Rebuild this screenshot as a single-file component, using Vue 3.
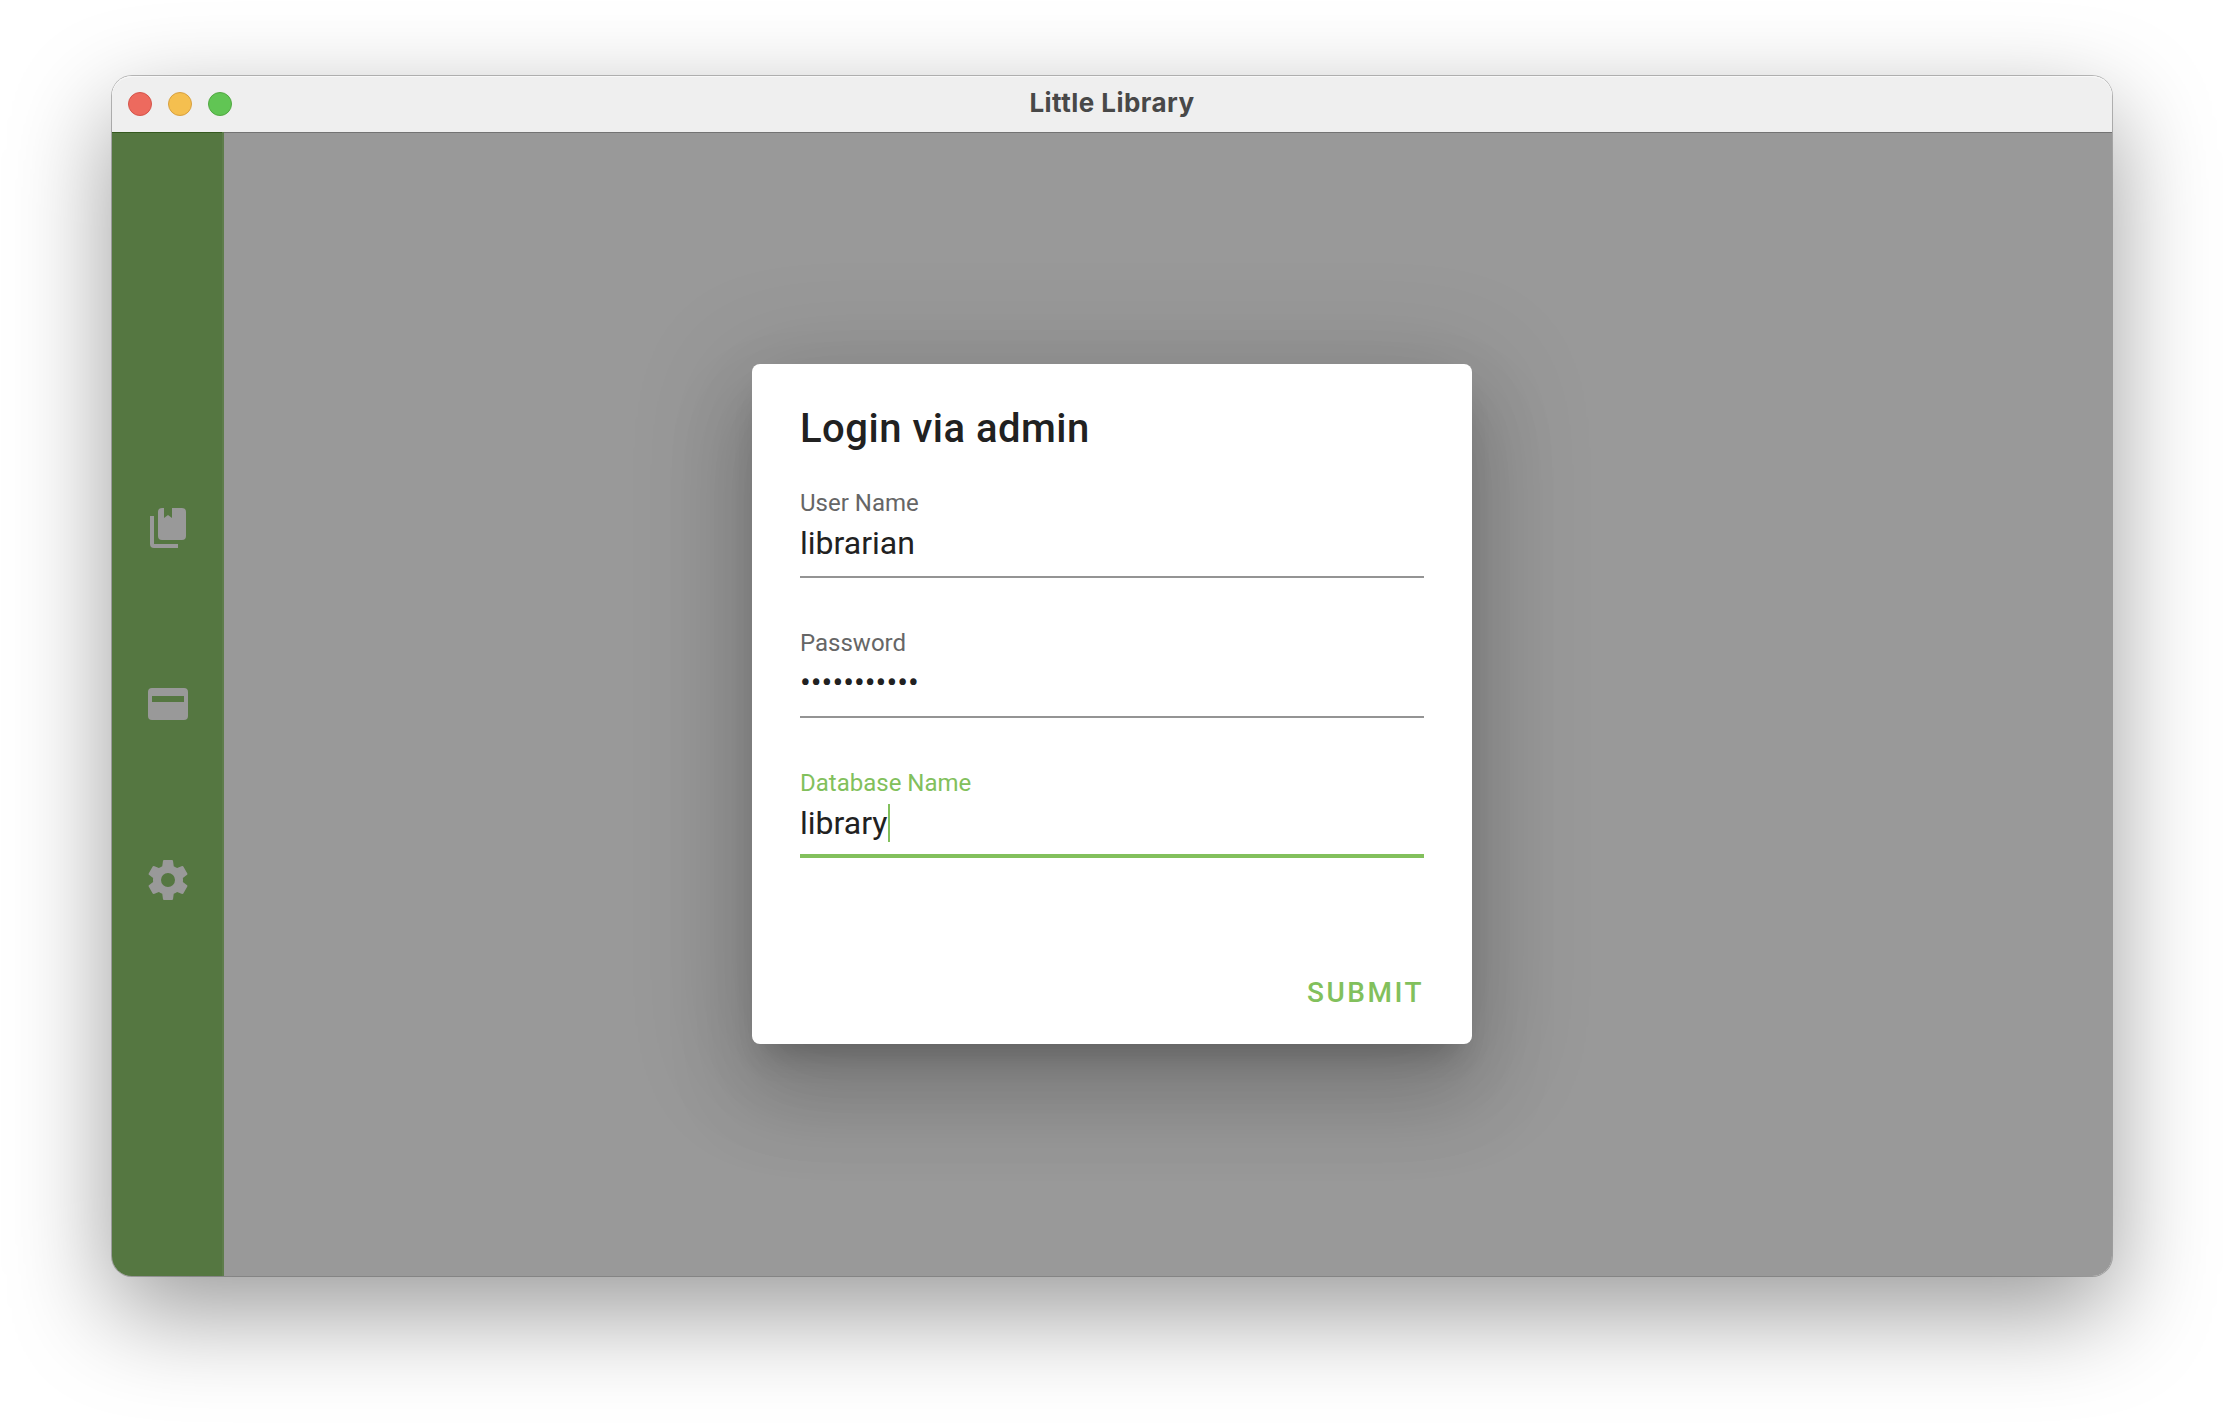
<script setup>
const navItems = [
  {
    name: 'books',
    path: 'M19 18a2 2 0 0 0 2-2V4a2 2 0 0 0-2-2h-5v5l-2-1.5L10 7V2H9a2 2 0 0 0-2 2v12a2 2 0 0 0 2 2h10zM17 20v2H5a2 2 0 0 1-2-2V6h2v14h12z',
  },
  {
    name: 'cards',
    path: 'M4 4h16a2 2 0 0 1 2 2v12a2 2 0 0 1-2 2H4a2 2 0 0 1-2-2V6a2 2 0 0 1 2-2zM4 8v3h16V8z',
  },
  {
    name: 'settings',
    path: 'M12 15.5A3.5 3.5 0 0 1 8.5 12 3.5 3.5 0 0 1 12 8.5a3.5 3.5 0 0 1 3.5 3.5 3.5 3.5 0 0 1-3.5 3.5m7.43-2.53c.04-.32.07-.64.07-.97s-.03-.66-.07-1l2.11-1.63c.19-.15.24-.42.12-.64l-2-3.46c-.12-.22-.39-.31-.61-.22l-2.49 1c-.52-.39-1.06-.73-1.69-.98l-.37-2.65A.506.506 0 0 0 14 2h-4c-.25 0-.46.18-.5.42l-.37 2.65c-.63.25-1.17.59-1.69.98l-2.49-1c-.22-.09-.49 0-.61.22l-2 3.46c-.13.22-.07.49.12.64L4.57 11c-.04.34-.07.67-.07 1s.03.65.07.97l-2.11 1.66c-.19.15-.25.42-.12.64l2 3.46c.12.22.39.3.61.22l2.49-1.01c.52.4 1.06.74 1.69.99l.37 2.65c.04.24.25.42.5.42h4c.25 0 .46-.18.5-.42l.37-2.65c.63-.26 1.17-.59 1.69-.99l2.49 1.01c.22.08.49 0 .61-.22l2-3.46c.12-.22.07-.49-.12-.64z',
  },
]

const fields = [
  { label: 'User Name', value: 'librarian' },
  { label: 'Password', value: '•••••••••••', secret: true },
  { label: 'Database Name', value: 'library', focused: true },
]
</script>

<template>
  <div class="desktop">
    <div class="window">
      <header class="titlebar">
        <div class="lights">
          <i class="light close"></i>
          <i class="light minimize"></i>
          <i class="light zoom"></i>
        </div>
        <span class="window-title">Little Library</span>
      </header>
      <div class="body">
        <nav class="sidebar">
          <svg v-for="item in navItems" :key="item.name" class="nav-icon" viewBox="0 0 24 24">
            <path :d="item.path" fill-rule="evenodd" />
          </svg>
        </nav>
        <main class="content">
          <section class="dialog">
            <h1 class="dialog-title">Login via admin</h1>
            <div
              v-for="field in fields"
              :key="field.label"
              class="field"
              :class="{ focused: field.focused }"
            >
              <label class="label">{{ field.label }}</label>
              <div class="value">
                <span :class="{ secret: field.secret }">{{ field.value }}</span>
                <i v-if="field.focused" class="caret"></i>
              </div>
            </div>
            <div class="actions">
              <button class="submit">SUBMIT</button>
            </div>
          </section>
        </main>
      </div>
    </div>
  </div>
</template>

<style>
body {
  margin: 0;
  background: #fff;
}
</style>

<style scoped>
.desktop {
  box-sizing: border-box;
  width: 2224px;
  height: 1424px;
  padding: 76px 112px 148px;
  overflow: hidden;
  background: #fff;
  font-family: Roboto, sans-serif;
}
.window {
  display: flex;
  flex-direction: column;
  height: 1200px;
  border-radius: 20px;
  box-shadow: 0 0 0 1px rgba(0, 0, 0, 0.25), 0 36px 100px rgba(0, 0, 0, 0.4);
}
.titlebar {
  display: grid;
  grid-template-columns: 1fr auto 1fr;
  align-items: center;
  box-sizing: border-box;
  height: 56px;
  padding: 0 16px;
  border-radius: 20px 20px 0 0;
  background: #efefef;
  box-shadow: inset 0 1px 0 #f8f8f8;
}
.lights {
  display: flex;
  gap: 16px;
}
.light {
  box-sizing: border-box;
  width: 24px;
  height: 24px;
  border-radius: 50%;
}
.close {
  background: #ed6a5e;
  border: 1px solid #d5544a;
}
.minimize {
  background: #f5bf4f;
  border: 1px solid #d8a040;
}
.zoom {
  background: #61c554;
  border: 1px solid #52a842;
}
.window-title {
  padding-bottom: 2px;
  font: 700 26px/32px Inter, sans-serif;
  letter-spacing: 0.45px;
  color: #484848;
}
.body {
  display: flex;
  flex: 1;
  border-radius: 0 0 20px 20px;
  overflow: hidden;
  background: #999;
  box-shadow: inset 0 1px 0 #737373;
}
.sidebar {
  display: flex;
  flex-direction: column;
  align-items: center;
  justify-content: center;
  gap: 128px;
  box-sizing: border-box;
  width: 112px;
  border-right: 2px solid #5e7d4b;
  background: #557741;
  box-shadow: inset 0 1px 0 #35591f;
}
.nav-icon {
  width: 48px;
  height: 48px;
  fill: #999;
  margin-left: 2px;
}
.content {
  display: flex;
  flex: 1;
  align-items: center;
  justify-content: center;
  padding-right: 112px;
}
.dialog {
  display: flex;
  flex-direction: column;
  box-sizing: border-box;
  width: 720px;
  height: 680px;
  padding: 33px 48px 27px;
  border-radius: 8px;
  background: #fff;
  box-shadow: 0 22px 30px -14px rgba(0, 0, 0, 0.2), 0 48px 84px 6px rgba(0, 0, 0, 0.14),
    0 18px 112px 18px rgba(0, 0, 0, 0.13);
}
.dialog-title {
  margin: 0 0 28px;
  font-size: 40px;
  font-weight: 500;
  line-height: 64px;
  letter-spacing: 0.5px;
  color: #212121;
}
.field {
  height: 140px;
}
.label {
  display: block;
  margin-bottom: 6px;
  font-size: 24px;
  line-height: 28px;
  color: #666;
}
.value {
  display: flex;
  align-items: center;
  height: 40px;
  padding-bottom: 13px;
  border-bottom: 2px solid #949494;
  font-size: 32px;
  line-height: 40px;
  color: #212121;
}
.secret {
  padding-bottom: 2px;
}
.focused .label {
  color: #82c05c;
}
.focused .value {
  padding-bottom: 11px;
  border-bottom: 4px solid #82c05c;
}
.caret {
  width: 2px;
  height: 38px;
  margin-left: 1px;
  background: #82c05c;
}
.actions {
  display: flex;
  justify-content: flex-end;
  margin-top: auto;
}
.submit {
  padding: 0;
  border: 0;
  background: none;
  font: 500 28px/48px Roboto, sans-serif;
  letter-spacing: 2.5px;
  color: #82c05c;
}
</style>
